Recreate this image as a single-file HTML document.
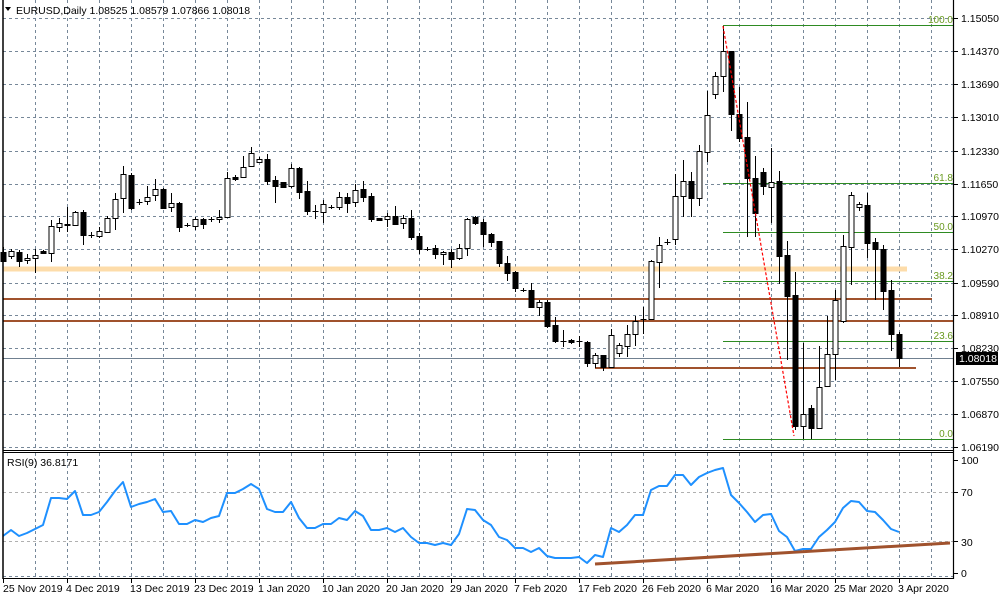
<!DOCTYPE html>
<html><head><meta charset="utf-8"><style>
html,body{margin:0;padding:0;background:#fff;width:1000px;height:600px;overflow:hidden}
svg{display:block}
text{font-family:"Liberation Sans",sans-serif;font-size:10.5px;fill:#000}
text.fib{fill:#6a9a20;font-size:10px}
</style></head><body>
<svg id="s" width="1000" height="600" xmlns="http://www.w3.org/2000/svg">
<rect width="1000" height="600" fill="#fff"/>
<g id="grid"></g>
<rect x="3" y="266.5" width="904" height="5" fill="#fddcaa"/>
<line x1="3" y1="299" x2="932" y2="299" stroke="#a0522d" stroke-width="2"/>
<line x1="3" y1="321" x2="954" y2="321" stroke="#a0522d" stroke-width="2"/>
<line x1="3" y1="358.5" x2="954" y2="358.5" stroke="#708090" stroke-width="1"/>
<line x1="595" y1="368" x2="916" y2="368" stroke="#a0522d" stroke-width="2"/>
<g stroke="#2e8b22" stroke-width="1">
<line x1="723" y1="25.5" x2="954" y2="25.5"/>
<line x1="723" y1="183.5" x2="954" y2="183.5"/>
<line x1="723" y1="232.5" x2="954" y2="232.5"/>
<line x1="723" y1="281.5" x2="954" y2="281.5"/>
<line x1="723" y1="341.5" x2="954" y2="341.5"/>
<line x1="723" y1="439.5" x2="954" y2="439.5"/>
</g>
<g text-anchor="end">
<text class="fib" x="953" y="23" style="fill:#6a9a20">100.0</text>
<text class="fib" x="953" y="181" style="fill:#6a9a20">61.8</text>
<text class="fib" x="953" y="230" style="fill:#6a9a20">50.0</text>
<text class="fib" x="953" y="279" style="fill:#6a9a20">38.2</text>
<text class="fib" x="953" y="339" style="fill:#6a9a20">23.6</text>
<text class="fib" x="953" y="437" style="fill:#6a9a20">0.0</text>
</g>
<g id="candles"></g>
<line x1="723" y1="26" x2="794" y2="436" stroke="#ff0000" stroke-width="1.2" stroke-dasharray="3,2"/>
<polyline id="rsi" fill="none" stroke="#1e90ff" stroke-width="2" stroke-linejoin="round"/>
<line x1="595" y1="564" x2="950" y2="543" stroke="#a0522d" stroke-width="3"/>
<line x1="3" y1="0" x2="3" y2="579" stroke="#000" stroke-width="1.5"/>
<line x1="953.5" y1="0" x2="953.5" y2="579" stroke="#000" stroke-width="1.2"/>
<line x1="3" y1="450.5" x2="954" y2="450.5" stroke="#000" stroke-width="1"/>
<line x1="3" y1="452.5" x2="954" y2="452.5" stroke="#000" stroke-width="1"/>
<line x1="3" y1="578.5" x2="954" y2="578.5" stroke="#000" stroke-width="1"/>
<g id="ticks" stroke="#000" stroke-width="1"></g>
<path d="M5 7 L11 7 L8 11 Z" fill="#000"/>
<text x="16" y="14">EURUSD,Daily  1.08525 1.08579 1.07866 1.08018</text>
<text x="7" y="466">RSI(9) 36.8171</text>
<g>
<text x="961" y="22">1.15050</text>
<text x="961" y="55">1.14370</text>
<text x="961" y="88">1.13690</text>
<text x="961" y="121">1.13010</text>
<text x="961" y="155">1.12330</text>
<text x="961" y="188">1.11650</text>
<text x="961" y="220">1.10970</text>
<text x="961" y="253">1.10270</text>
<text x="961" y="287">1.09590</text>
<text x="961" y="319">1.08910</text>
<text x="961" y="352">1.08230</text>
<rect x="956" y="352" width="42" height="13" fill="#000"/>
<text x="959" y="362" style="fill:#fff">1.08018</text>
<text x="961" y="385">1.07550</text>
<text x="961" y="418">1.06870</text>
<text x="961" y="451">1.06190</text>
<text x="961" y="464">100</text>
<text x="961" y="496">70</text>
<text x="961" y="546">30</text>
<text x="961" y="577">0</text>
</g>
<g>
<text x="3" y="592">25 Nov 2019</text>
<text x="66" y="592">4 Dec 2019</text>
<text x="130" y="592">13 Dec 2019</text>
<text x="194" y="592">23 Dec 2019</text>
<text x="258" y="592">1 Jan 2020</text>
<text x="322" y="592">10 Jan 2020</text>
<text x="386" y="592">20 Jan 2020</text>
<text x="450" y="592">29 Jan 2020</text>
<text x="514" y="592">7 Feb 2020</text>
<text x="578" y="592">17 Feb 2020</text>
<text x="642" y="592">26 Feb 2020</text>
<text x="706" y="592">6 Mar 2020</text>
<text x="770" y="592">16 Mar 2020</text>
<text x="834" y="592">25 Mar 2020</text>
<text x="898" y="592">3 Apr 2020</text>
</g>
</svg>
<script>
var NS="http://www.w3.org/2000/svg";
function el(p,n,a){var e=document.createElementNS(NS,n);for(var k in a)e.setAttribute(k,a[k]);p.appendChild(e);return e;}
var g=document.getElementById("grid");
for(var x=35;x<954;x+=32){el(g,"line",{x1:x+.5,y1:0,x2:x+.5,y2:450,stroke:"#778899","stroke-dasharray":"3,3"});
 el(g,"line",{x1:x+.5,y1:453,x2:x+.5,y2:578,stroke:"#778899","stroke-dasharray":"3,3"});}
[18,51,84,117,151,184,216,249,283,315,348,381,414,447].forEach(function(y){el(g,"line",{x1:3,y1:y+.5,x2:954,y2:y+.5,stroke:"#778899","stroke-dasharray":"3,3"});});
[492,541].forEach(function(y){el(g,"line",{x1:3,y1:y+.5,x2:954,y2:y+.5,stroke:"#b0b0b0","stroke-dasharray":"3,3"});});
el(g,"line",{x1:3,y1:576.5,x2:954,y2:576.5,stroke:"#778899","stroke-dasharray":"3,3"});
var t=document.getElementById("ticks");
[18,51,84,117,151,184,216,249,283,315,348,381,414,447,460,492,541,573].forEach(function(y){el(t,"line",{x1:954,y1:y+.5,x2:958,y2:y+.5});});
for(var x=3;x<954;x+=64){el(t,"line",{x1:x+.5,y1:579,x2:x+.5,y2:583});}
var C=[
["b",252,261,247,262],["w",251,256,249,259],["b",252,261,250,267],["w",258,260,254,264],["w",255,258,249,273],["b",251,253,250,254],
["w",226,253,220,262],["w",223,227,218,232],["b",224,225,207,232],["w",212,225,211,225],["b",212,235,210,245],["d",235,235,232,238],
["w",231,236,227,238],["w",218,232,216,233],["w",199,218,193,230],["w",174,198,166,213],["b",175,208,173,210],["d",202,202,199,205],
["w",197,201,186,205],["w",189,195,179,201],["b",189,208,188,209],["w",203,207,193,212],["b",203,227,202,232],["d",225,225,223,227],
["w",219,226,217,230],["b",219,224,218,229],["d",219,219,217,222],["w",217,219,210,223],["w",178,217,172,218],["b",177,179,175,181],
["w",167,177,156,178],["w",153,166,147,167],["w",159,162,157,163],["b",159,181,154,185],["b",180,186,176,203],["b",182,187,182,187],
["w",168,186,164,188],["b",168,192,167,199],["b",191,211,181,215],["d",211,211,205,219],["w",204,212,200,223],["d",207,207,205,209],
["w",197,207,192,210],["b",197,203,193,213],["w",190,202,184,207],["b",189,197,181,202],["b",196,219,193,222],["b",218,220,218,220],
["w",216,219,213,227],["b",216,224,206,225],["w",218,223,215,229],["b",218,237,210,240],["b",236,249,233,254],["d",249,249,247,251],
["b",248,254,245,259],["w",252,254,251,265],["b",252,259,249,268],["w",248,258,244,260],["w",219,248,218,256],["b",217,223,216,225],
["b",222,234,219,247],["b",234,242,233,247],["b",241,263,241,267],["b",263,273,256,281],["b",272,288,271,292],["d",290,290,288,292],
["b",290,307,283,308],["w",302,307,300,316],["b",302,326,300,328],["b",325,341,317,343],["d",341,341,330,347],["b",340,342,339,344],
["d",341,341,336,347],["b",342,363,341,367],["w",355,363,353,368],["b",355,367,355,371],["w",335,367,329,367],["w",345,353,343,357],
["w",334,346,325,357],["w",321,334,316,346],["d",319,319,307,334],["w",261,319,260,319],["w",245,262,237,288],["d",242,242,239,245],
["w",196,239,174,245],["w",181,196,160,217],["b",181,198,172,217],["w",151,198,145,206],["w",115,152,91,162],["w",76,94,72,99],
["w",51,76,26,92],["b",51,114,51,131],["b",114,138,87,142],["b",137,178,102,237],["b",178,213,156,237],["b",172,186,168,195],
["w",182,187,148,223],["b",181,256,171,284],["b",255,296,241,360],["b",295,426,272,430],["w",414,426,343,439],["b",408,428,405,439],
["w",387,428,346,428],["w",354,386,316,387],["w",300,354,290,380],["w",246,321,235,323],["w",195,247,192,285],["w",204,207,202,211],
["b",205,243,193,258],["b",242,249,238,300],["b",249,291,245,310],["b",290,334,280,351],["b",334,358,332,367]
];
var cg=document.getElementById("candles");
C.forEach(function(c,i){var x=3+8*i+.5;
 el(cg,"line",{x1:x,y1:c[3],x2:x,y2:c[4],stroke:"#000"});
 if(c[0]=="d"){el(cg,"line",{x1:x-3,y1:c[1]+.5,x2:x+3,y2:c[1]+.5,stroke:"#000"});}
 else{var h=Math.max(c[2]-c[1],1);el(cg,"rect",{x:x-2.5,y:c[1]+.5,width:5,height:h,fill:c[0]=="w"?"#fff":"#000",stroke:"#000","stroke-width":1});}
});
var R=[536,530,536,533,529,525,498,498,499,491,515,515,512,502,491,482,507,504,502,499,512,511,524,524,520,522,518,516,493,493,489,484,489,509,512,512,502,518,528,528,524,524,518,520,511,516,530,530,528,532,528,537,543,543,545,543,545,534,509,510,520,525,537,540,548,548,552,548,556,558,558,558,557,563,555,557,528,532,525,515,515,490,486,486,475,475,485,477,473,470,468,495,503,512,522,515,514,531,537,551,549,549,537,530,522,508,501,502,511,512,520,529,532];
document.getElementById("rsi").setAttribute("points",R.map(function(y,i){return (3+8*i)+","+y;}).join(" "));
</script>
</body></html>
